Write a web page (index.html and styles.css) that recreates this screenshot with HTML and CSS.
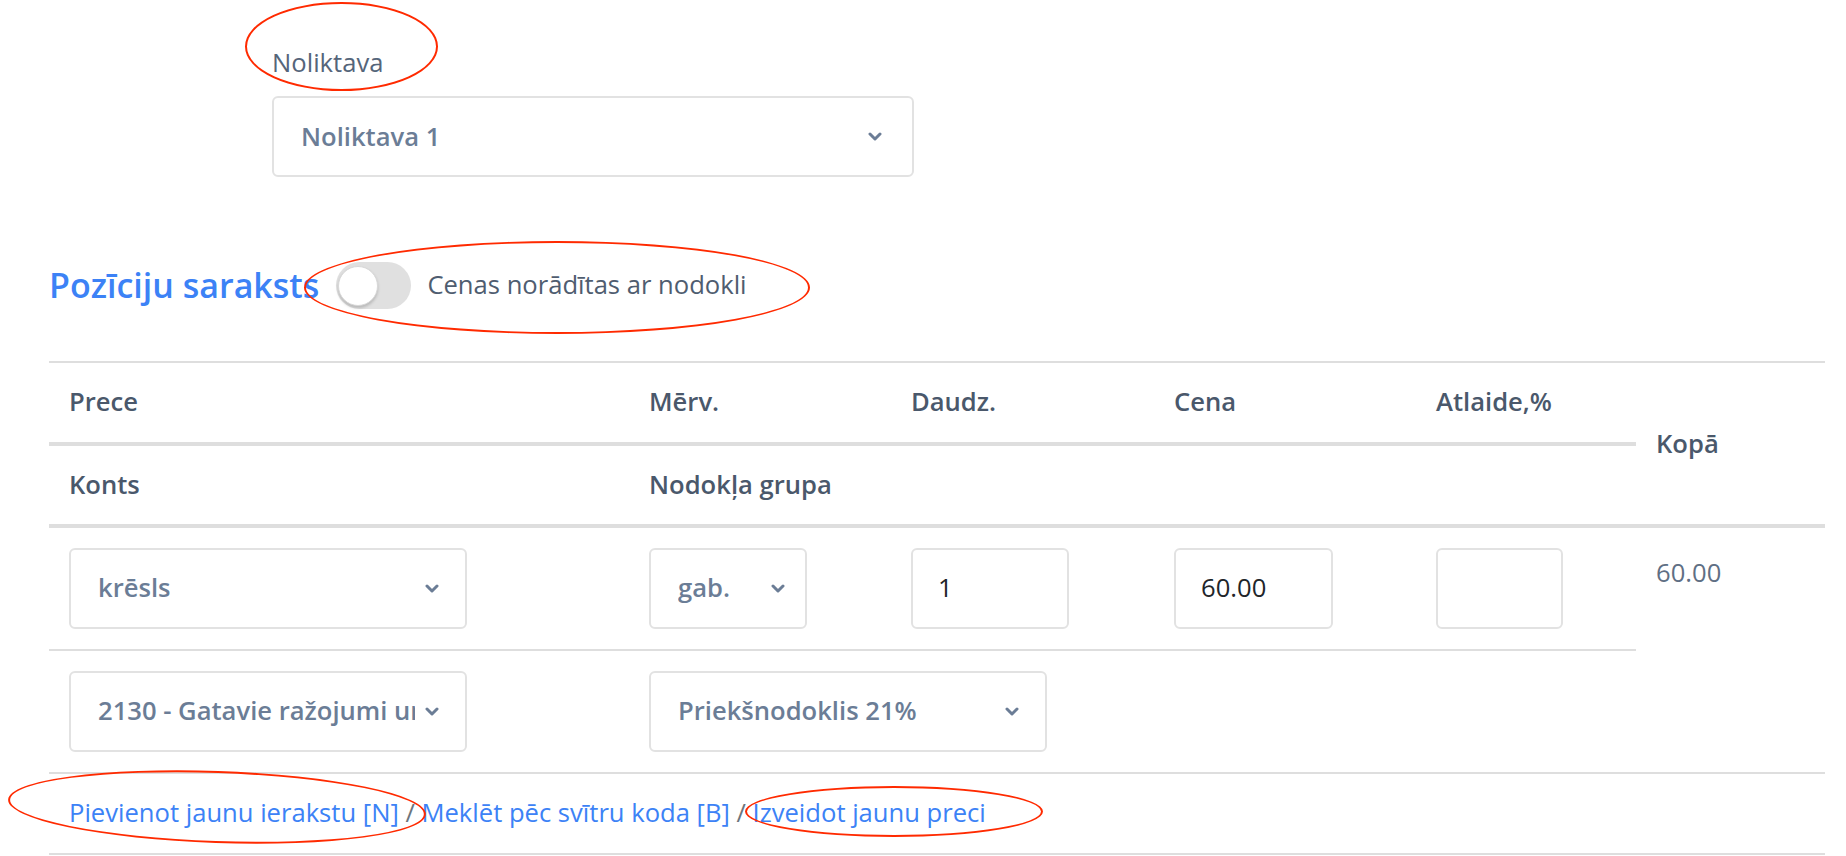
FILE: index.html
```html
<!DOCTYPE html>
<html lang="lv">
<head>
<meta charset="utf-8">
<title>Pozīciju saraksts</title>
<link rel="stylesheet" href="styles.css">
</head>
<body>
<div class="page">
  <div class="form-group warehouse">
    <label class="field-label">Noliktava</label>
    <div class="select select-wide">
      <span class="select-text">Noliktava 1</span>
      <svg class="chev" width="14" height="10" viewBox="0 0 14 10"><polyline points="2,2 7,7 12,2" /></svg>
    </div>
  </div>

  <div class="section-head">
    <h2 class="section-title">Pozīciju saraksts</h2>
    <span class="switch"><span class="knob"></span></span>
    <span class="switch-label">Cenas norādītas ar nodokli</span>
  </div>

  <table class="items">
    <colgroup>
      <col class="c1"><col class="c2"><col class="c3"><col class="c4"><col class="c5"><col class="c6">
    </colgroup>
    <thead>
      <tr class="h1">
        <th>Prece</th>
        <th>Mērv.</th>
        <th>Daudz.</th>
        <th>Cena</th>
        <th>Atlaide,%</th>
        <th rowspan="2" class="total-head">Kopā</th>
      </tr>
      <tr class="h2">
        <th>Konts</th>
        <th colspan="4">Nodokļa grupa</th>
      </tr>
    </thead>
    <tbody>
      <tr class="r1">
        <td>
          <div class="select select-prod">
            <span class="select-text">krēsls</span>
            <svg class="chev" width="14" height="10" viewBox="0 0 14 10"><polyline points="2,2 7,7 12,2" /></svg>
          </div>
        </td>
        <td>
          <div class="select select-unit">
            <span class="select-text">gab.</span>
            <svg class="chev" width="14" height="10" viewBox="0 0 14 10"><polyline points="2,2 7,7 12,2" /></svg>
          </div>
        </td>
        <td><div class="input input-num">1</div></td>
        <td><div class="input input-price">60.00</div></td>
        <td><div class="input input-disc"></div></td>
        <td rowspan="2" class="total">60.00</td>
      </tr>
      <tr class="r2">
        <td>
          <div class="select select-prod">
            <span class="select-text clip">2130 - Gatavie ražojumi un preces pārdošanai</span>
            <svg class="chev" width="14" height="10" viewBox="0 0 14 10"><polyline points="2,2 7,7 12,2" /></svg>
          </div>
        </td>
        <td colspan="4">
          <div class="select select-prod">
            <span class="select-text">Priekšnodoklis 21%</span>
            <svg class="chev" width="14" height="10" viewBox="0 0 14 10"><polyline points="2,2 7,7 12,2" /></svg>
          </div>
        </td>
      </tr>
      <tr class="links">
        <td colspan="6">
          <a href="#">Pievienot jaunu ierakstu [N]</a><span class="sep"> / </span><a href="#">Meklēt pēc svītru koda [B]</a><span class="sep"> / </span><a href="#">Izveidot jaunu preci</a>
        </td>
      </tr>
    </tbody>
  </table>

  <span class="mark mark-1"></span>
  <span class="mark mark-2"></span>
  <span class="mark mark-3"></span>
  <span class="mark mark-4"></span>
</div>
</body>
</html>
```

FILE: styles.css
```css
html, body {
  margin: 0;
  padding: 0;
  background: #ffffff;
}

body {
  font-family: "Open Sans", "Noto Sans", "Liberation Sans", sans-serif;
  font-size: 25.6px;
  line-height: 1.5;
  color: #4f5d70;
}

.page {
  position: relative;
  padding: 44px 21px 0 49px;
  min-height: 856px;
  box-sizing: border-box;
}

.warehouse {
  margin-left: 223px;
  width: 642px;
}

.field-label {
  display: block;
  color: #55657a;
  margin-bottom: 14px;
}

.select {
  box-sizing: border-box;
  height: 81px;
  border: 2px solid #e2e2e2;
  border-radius: 6px;
  background: #fff;
  display: flex;
  align-items: center;
  padding: 0 26px 0 27px;
  color: #6b7d96;
  font-weight: 600;
}

.select-text {
  flex: 1;
  white-space: nowrap;
  overflow: hidden;
}

.select-text.clip {
  text-overflow: clip;
  margin-right: 10px;
}

.chev {
  flex: none;
  fill: none;
  stroke: #6b7d96;
  stroke-width: 3;
  stroke-linecap: round;
  stroke-linejoin: round;
}

.select-wide { width: 642px; padding-right: 30px; }
.select-prod { width: 398px; }
.select-unit { width: 158px; padding-right: 20px; }

.section-head {
  display: flex;
  align-items: center;
  height: 48px;
  margin-top: 84px;
  margin-bottom: 52px;
}

.section-title {
  margin: 0;
  font-size: 34px;
  font-weight: 600;
  line-height: 1.2;
  color: #3c82f6;
}

.switch {
  position: relative;
  display: inline-block;
  width: 75px;
  height: 47px;
  border-radius: 24px;
  background: #e0e0e0;
  margin-left: 17px;
  margin-right: 16px;
}

.knob {
  position: absolute;
  left: 2px;
  top: 4px;
  width: 38px;
  height: 38px;
  border-radius: 50%;
  background: #fff;
  border: 1px solid #d8d8d8;
  box-shadow: 0 2px 3px rgba(0, 0, 0, 0.18);
}

.switch-label {
  color: #4f5d70;
}

.items {
  width: 1776px;
  border-collapse: collapse;
  table-layout: fixed;
}

.c1 { width: 580px; }
.c2 { width: 262px; }
.c3 { width: 263px; }
.c4 { width: 262px; }
.c5 { width: 220px; }
.c6 { width: 189px; }

.items th,
.items td {
  padding: 20px;
  text-align: left;
  vertical-align: top;
}

.items th {
  font-weight: 600;
  color: #4a586b;
  vertical-align: middle;
}

.h1 th {
  border-top: 2px solid #dedede;
  border-bottom: 4px solid #dedede;
}

.h2 th,
.items th.total-head {
  border-bottom: 4px solid #dedede;
}

.r1 td {
  border-bottom: 2px solid #dedede;
}

.r2 td,
.items td.total {
  border-bottom: 2px solid #dedede;
}

.items td.total {
  color: #5f6f84;
  padding-top: 26px;
}

.input {
  box-sizing: border-box;
  height: 81px;
  border: 2px solid #e2e2e2;
  border-radius: 6px;
  padding: 0 25px;
  display: flex;
  align-items: center;
  color: #212529;
}

.input-num { width: 158px; }
.input-price { width: 159px; }
.input-disc { width: 127px; }

.links td {
  border-bottom: 2px solid #dedede;
}

.links a {
  color: #3c82f6;
  text-decoration: none;
}

.sep {
  color: #6c757d;
}

.mark {
  position: absolute;
  border: 2px solid #ff2a00;
  border-radius: 50%;
  box-sizing: border-box;
  pointer-events: none;
}

.mark-1 { left: 245px; top: 2px; width: 193px; height: 89px; }
.mark-2 { left: 304px; top: 241px; width: 506px; height: 93px; }
.mark-3 { left: 8px; top: 771px; width: 418px; height: 72px; transform: rotate(2deg); }
.mark-4 { left: 745px; top: 786px; width: 298px; height: 51px; }
```
